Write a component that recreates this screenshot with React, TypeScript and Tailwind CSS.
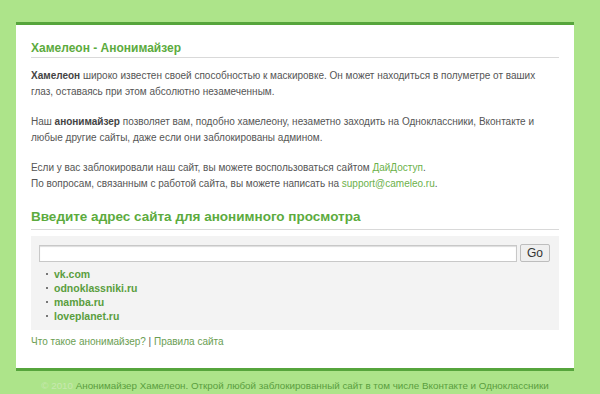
export default function App() {
  const sites = ['vk.com', 'odnoklassniki.ru', 'mamba.ru', 'loveplanet.ru']

  return (
    <div className="w-[600px] h-[394px] overflow-hidden bg-[#ade48a] pt-[22px] font-['Liberation_Sans',Arial,sans-serif] text-[10px] text-[#555]">
      {/* main panel */}
      <div className="ml-[16px] w-[558px] bg-white border-t-[3px] border-b-[3px] border-[#56a53c] px-[15px] pt-[15px] pb-[18px]">
        <h1 className="text-[12px] font-bold text-[#5cab3e] leading-[16px] pb-[1px] border-b border-[#d9d9d9]">
          Хамелеон - Анонимайзер
        </h1>

        <p className="mt-[10px] leading-[16px]">
          <b className="text-[#444]">Хамелеон</b> широко известен своей способностью к маскировке. Он может находиться в полуметре от ваших глаз, оставаясь при этом абсолютно незамеченным.
        </p>
        <p className="mt-[14px] leading-[16px]">
          Наш <b className="text-[#444]">анонимайзер</b> позволяет вам, подобно хамелеону, незаметно заходить на Одноклассники, Вконтакте и любые другие сайты, даже если они заблокированы админом.
        </p>
        <p className="mt-[14px] leading-[16px]">
          Если у вас заблокировали наш сайт, вы можете воспользоваться сайтом <a className="text-[#6cb14a]">ДайДоступ</a>.
          <br />
          По вопросам, связанным с работой сайта, вы можете написать на <a className="text-[#6cb14a]">support@cameleo.ru</a>.
        </p>

        <h2 className="mt-[16px] text-[13.5px] font-bold text-[#5cab3e] leading-[18px] pb-[3px] border-b border-[#d9d9d9]">
          Введите адрес сайта для анонимного просмотра
        </h2>

        <div className="mt-[6px] bg-[#f3f3f3] px-[8px] pt-[8px] pb-[7px]">
          <div className="flex items-center gap-[3px]">
            <input className="w-[478px] h-[17px] bg-white border border-[#c8c8c8] shadow-[inset_0_1px_1px_#ddd]" />
            <button className="h-[18px] px-[6px] text-[12px] text-[#333] bg-[#efefef] border border-[#bdbdbd] rounded-[2px] leading-none">
              Go
            </button>
          </div>
          <ul className="mt-[5px] ml-[7px]">
            {sites.map((s) => (
              <li key={s} className="flex items-center gap-[6px] leading-[14px] text-[10.5px] font-bold text-[#5a9e3e]">
                <span className="w-[2px] h-[2px] bg-[#777]" />
                {s}
              </li>
            ))}
          </ul>
        </div>

        <div className="mt-[4px] leading-[16px]">
          <a className="text-[#6b9e53]">Что такое анонимайзер?</a> <span className="text-[#555]">|</span>{' '}
          <a className="text-[#6b9e53]">Правила сайта</a>
        </div>
      </div>

      {/* footer */}
      <div className="ml-[16px] w-[558px] mt-[7px] text-center text-[9.8px] whitespace-nowrap text-[#5a9e3e] leading-[16px]">
        <span className="text-[#c8e8b0]">© 2010</span> Анонимайзер Хамелеон. Открой любой заблокированный сайт в том числе Вконтакте и Одноклассники
      </div>
    </div>
  )
}
